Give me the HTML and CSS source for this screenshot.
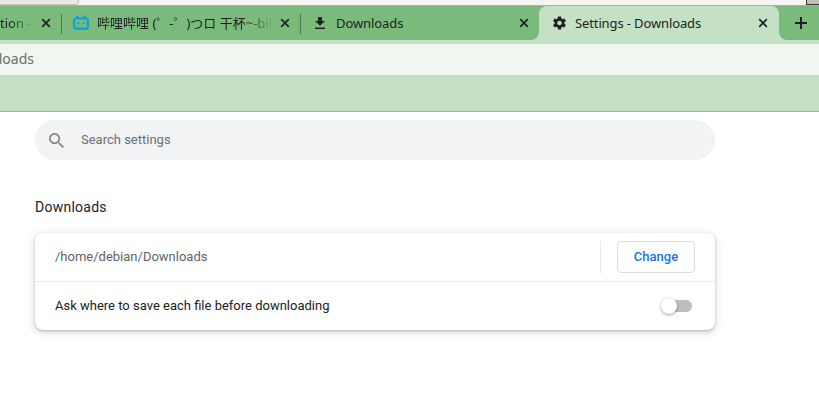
FILE: index.html
```html
<!DOCTYPE html>
<html lang="en">
<head>
<meta charset="utf-8">
<title>Settings - Downloads</title>
<link rel="stylesheet" href="styles.css">
</head>
<body>
<div class="desktop"><div class="panel-left"></div><div class="panel-right"></div></div>
<header class="tabs">
  <div class="tab tab-cut">
    <span class="title fade-short">tion - </span>
    <svg class="close" viewBox="0 0 10 10"><path d="M1.2 1.2l7.6 7.6M8.8 1.2l-7.6 7.6"/></svg>
  </div>
  <div class="tab tab-bili">
    <svg class="bili" viewBox="0 0 16 16"><path d="M3.6.8l2 2.3M12.4.8l-2 2.3" stroke-width="2"/><rect x="1.1" y="3.5" width="13.8" height="10.2" rx="2" stroke-width="2.2"/><path d="M5.3 7v2.3M10.7 7v2.3" stroke-width="1.8"/><path d="M3.8 14v1M12.2 14v1" stroke-width="1.8"/></svg>
    <span class="title fade">哔哩哔哩 (゜-゜)つロ 干杯~-bili</span>
    <svg class="close" viewBox="0 0 10 10"><path d="M1.2 1.2l7.6 7.6M8.8 1.2l-7.6 7.6"/></svg>
  </div>
  <div class="tab tab-downloads">
    <svg class="download" viewBox="0 0 10 12"><path d="M3 0h4v4h3L5 8.8 0 4h3zM0 10.4h10V12H0z"/></svg>
    <span class="title">Downloads</span>
    <svg class="close" viewBox="0 0 10 10"><path d="M1.2 1.2l7.6 7.6M8.8 1.2l-7.6 7.6"/></svg>
  </div>
  <div class="tab tab-active">
    <svg class="gear" viewBox="2 2 20 20"><path d="M19.43 12.98c.04-.32.07-.64.07-.98s-.03-.66-.07-.98l2.11-1.65c.19-.15.24-.42.12-.64l-2-3.46c-.12-.22-.39-.3-.61-.22l-2.49 1c-.52-.4-1.08-.73-1.69-.98l-.38-2.65C14.46 2.18 14.25 2 14 2h-4c-.25 0-.46.18-.49.42l-.38 2.65c-.61.25-1.17.59-1.69.98l-2.49-1c-.23-.09-.49 0-.61.22l-2 3.46c-.13.22-.07.49.12.64l2.11 1.65c-.04.32-.07.65-.07.98s.03.66.07.98l-2.11 1.65c-.19.15-.24.42-.12.64l2 3.46c.12.22.39.3.61.22l2.49-1c.52.4 1.08.73 1.69.98l.38 2.65c.03.24.24.42.49.42h4c.25 0 .46-.18.49-.42l.38-2.65c.61-.25 1.17-.59 1.69-.98l2.49 1c.23.09.49 0 .61-.22l2-3.46c.12-.22.07-.49-.12-.64l-2.11-1.65zM12 15.5c-1.93 0-3.5-1.57-3.5-3.5s1.57-3.5 3.5-3.5 3.5 1.57 3.5 3.5-1.57 3.5-3.5 3.5z"/></svg>
    <span class="title">Settings - Downloads</span>
    <svg class="close" viewBox="0 0 10 10"><path d="M1.2 1.2l7.6 7.6M8.8 1.2l-7.6 7.6"/></svg>
  </div>
  <div class="new-tab"><svg class="plus" viewBox="0 0 12 12"><path d="M6 0v12M0 6h12"/></svg></div>
</header>
<div class="toolbar"><div class="address"><span class="url">loads</span></div></div>
<main>
  <div class="search">
    <svg class="magnifier" viewBox="3 3 17.5 17.5"><path d="M15.5 14h-.79l-.28-.27C15.41 12.59 16 11.11 16 9.5 16 5.91 13.09 3 9.5 3S3 5.91 3 9.5 5.91 16 9.5 16c1.61 0 3.09-.59 4.23-1.57l.27.28v.79l5 4.99L20.49 19l-4.99-5zm-6 0C7.01 14 5 11.99 5 9.5S7.01 5 9.5 5 14 7.01 14 9.5 11.99 14 9.5 14z"/></svg>
    <span>Search settings</span>
  </div>
  <h2>Downloads</h2>
  <section class="card">
    <div class="row">
      <span class="path">/home/debian/Downloads</span>
      <span class="divider"></span>
      <button class="change">Change</button>
    </div>
    <div class="row row-ask">
      <span class="label">Ask where to save each file before downloading</span>
      <span class="toggle"><span class="knob"></span></span>
    </div>
  </section>
</main>
</body>
</html>
```

FILE: styles.css
```css
* { box-sizing: border-box; }
body {
  margin: 0;
  width: 819px;
  height: 410px;
  overflow: hidden;
  background: #fff;
  font: 13px/20px Roboto, sans-serif;
  color: #202124;
}
svg { display: block; flex: none; }
.desktop {
  display: flex;
  justify-content: space-between;
  height: 6px;
  background: #f5f4f2;
  border-bottom: 1px solid #b3aea4;
}
.panel-left {
  width: 79px;
  height: 5px;
  background: #ebe8e5;
  border: solid #c9c3be;
  border-width: 0 1px 1px 0;
  border-radius: 0 0 4px 0;
}
.panel-right {
  width: 13px;
  height: 5px;
  background: #c4bfb7;
  border: solid #333;
  border-width: 0 0 1px 1px;
}
.tabs {
  display: flex;
  height: 34px;
  background: #c5e1c5;
  font-family: "Noto Sans", "Noto Sans CJK SC", sans-serif;
}
.tab {
  display: flex;
  align-items: center;
  background: #7abb7c;
  flex: none;
}
.title {
  flex: 1;
  min-width: 0;
  overflow: hidden;
  white-space: nowrap;
  color: #202124;
}
.close {
  width: 10px;
  height: 10px;
  fill: none;
  stroke: #202124;
  stroke-width: 1.7;
}
.tab-cut { width: 61px; padding-right: 10px; }
.tab-cut .title { margin-right: 10px; }
.fade-short {
  -webkit-mask-image: linear-gradient(90deg, #000 10px, transparent 34px);
  mask-image: linear-gradient(90deg, #000 10px, transparent 34px);
}
.tab-bili, .tab-downloads {
  background: linear-gradient(#497b4b, #497b4b) 0 8px / 1px 20px no-repeat #7abb7c;
}
.tab-bili { width: 239px; padding: 0 10px 0 12px; }
.bili { width: 16px; height: 16px; margin-right: 8px; fill: none; stroke: #0ba1dc; }
.tab-bili .title { margin-right: 8px; }
.fade {
  -webkit-mask-image: linear-gradient(90deg, #000 145px, transparent 178px);
  mask-image: linear-gradient(90deg, #000 145px, transparent 178px);
}
.tab-downloads { width: 239px; padding: 0 10px 0 15px; border-radius: 0 0 8px 0; }
.tab-downloads .title { letter-spacing: -.08px; }
.download { width: 10px; height: 12px; margin-right: 11px; fill: #202124; }
.tab-active {
  position: relative;
  z-index: 0;
  width: 240px;
  padding: 0 11px 0 14px;
  background: linear-gradient(#7abb7c, #7abb7c) 0 0 / 100% 10px no-repeat;
}
.tab-active::before {
  content: "";
  position: absolute;
  inset: 0;
  z-index: -1;
  background: #c5e1c5;
  border-radius: 8px 8px 0 0;
}
.tab-active .title { letter-spacing: -.12px; }
.gear { width: 13px; height: 14px; margin-right: 9px; fill: #202124; }
.new-tab {
  display: flex;
  align-items: center;
  flex: 1;
  padding-left: 16px;
  background: #7abb7c;
  border-radius: 0 0 0 8px;
}
.plus { width: 12px; height: 12px; stroke: #202124; stroke-width: 2; }
.toolbar {
  height: 72px;
  padding-top: 4px;
  background: #c5e1c5;
  border-bottom: 1px solid #9ab69b;
}
.address {
  display: flex;
  align-items: center;
  height: 31px;
  padding-bottom: 2px;
  background: #f0f7f0;
  font: 14px/20px "Noto Sans", sans-serif;
  color: #69706b;
}
.url { display: flex; justify-content: flex-end; width: 34px; }
main { width: 680px; margin: 8px 0 0 35px; }
.search {
  display: flex;
  align-items: center;
  height: 40px;
  padding-left: 14px;
  border-radius: 20px;
  background: #f1f3f4;
  color: #6b6f73;
}
.magnifier { width: 15px; height: 15px; margin-right: 17px; fill: #85878a; }
h2 {
  margin: 37px 0 16px;
  font-size: 14px;
  line-height: 20px;
  font-weight: 400;
  letter-spacing: .25px;
}
.card {
  height: 97px;
  border-radius: 8px;
  background: #fff;
  box-shadow: 0 1px 2px rgba(60, 64, 67, .3), 0 2px 6px 2px rgba(60, 64, 67, .15);
}
.row { display: flex; align-items: center; height: 48px; padding: 0 20px; }
.row-ask { height: 49px; padding-right: 23px; border-top: 1px solid #e8e9ea; }
.path { flex: 1; color: #5f6368; }
.label { flex: 1; }
.divider { width: 1px; height: 32px; margin-right: 16px; background: #e8e9ea; }
.change {
  width: 78px;
  height: 32px;
  padding: 0;
  border: 1px solid #dadce0;
  border-radius: 4px;
  background: #fff;
  color: #1a73e8;
  font: 500 13px/20px Roboto, sans-serif;
}
.toggle {
  position: relative;
  width: 28px;
  height: 12px;
  border-radius: 6px;
  background: #babdc1;
}
.knob {
  position: absolute;
  left: -3px;
  top: -2px;
  width: 16px;
  height: 16px;
  border-radius: 50%;
  background: #fff;
  box-shadow: 0 1px 3px rgba(0, 0, 0, .4);
}
```
